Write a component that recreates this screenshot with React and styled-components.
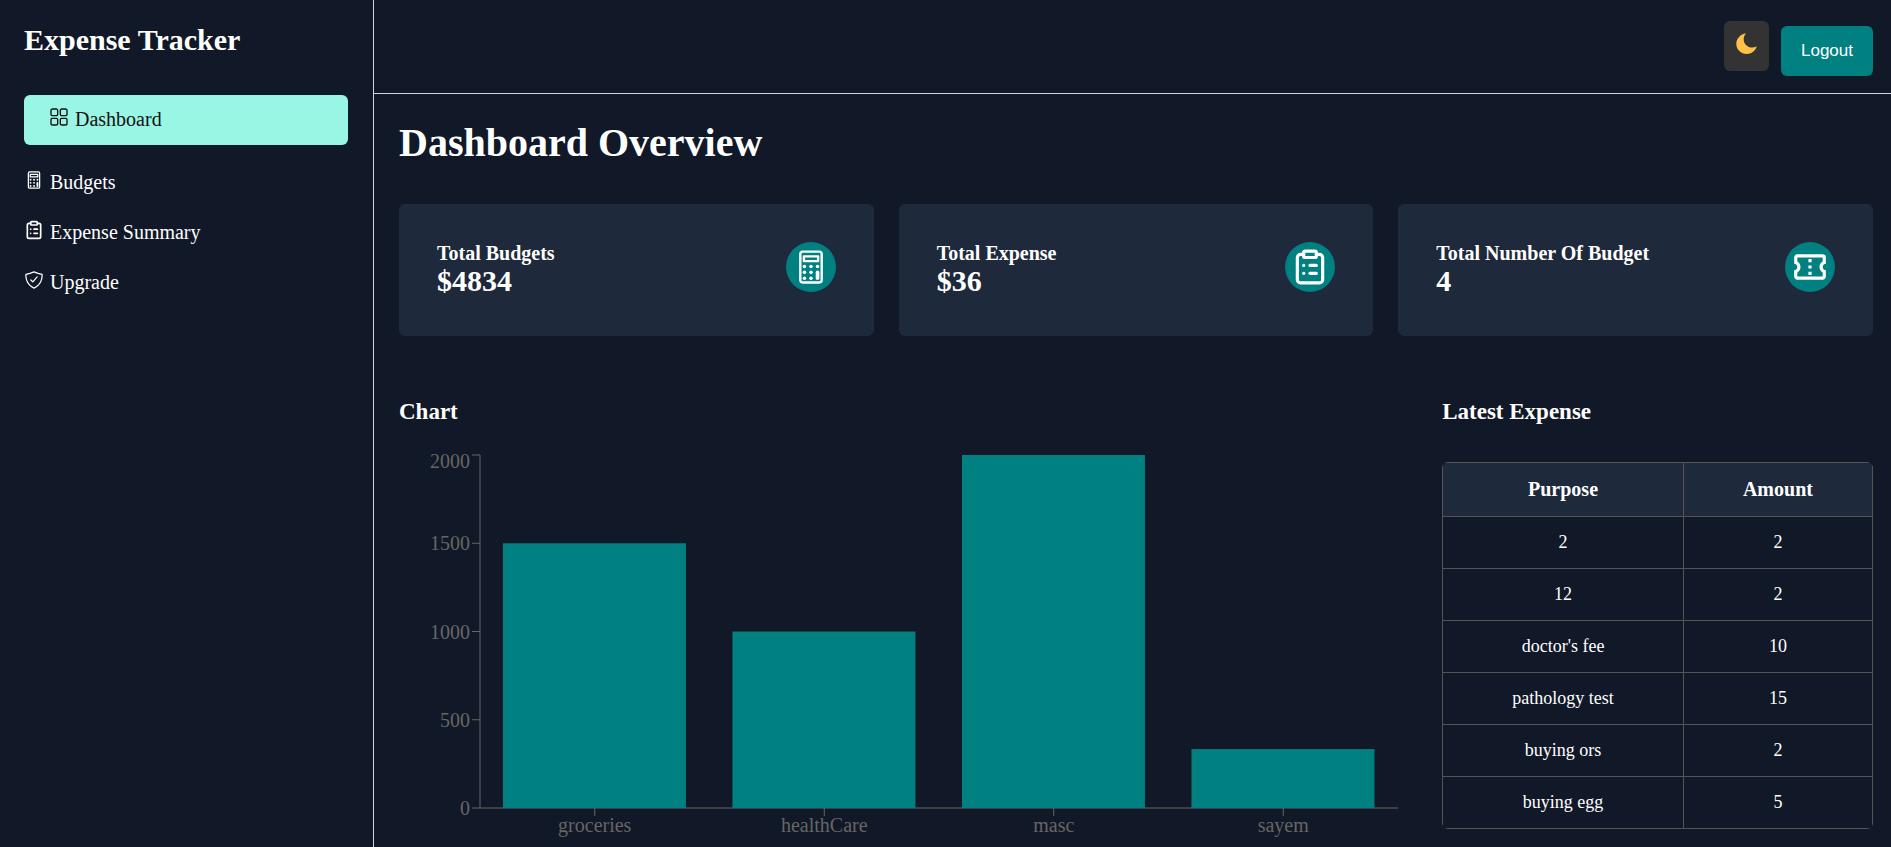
import React, { useLayoutEffect, useRef, useState } from "react";
import styled, { createGlobalStyle, css } from "styled-components";
import { LuClipboardList } from "react-icons/lu";
import { MdOutlineConfirmationNumber } from "react-icons/md";
import { RxDashboard } from "react-icons/rx";
import { IoCalculatorOutline, IoShieldCheckmarkOutline } from "react-icons/io5";

const serif = `"Liberation Serif", "Times New Roman", serif`;
const sans = `"Liberation Sans", Arial, sans-serif`;

const GlobalStyle = createGlobalStyle`
  *, *::before, *::after { box-sizing: border-box; }
  body {
    margin: 0;
    background: #111827;
    color: #ffffff;
    font-family: ${serif};
    font-size: 20px;
  }
  h1, h2, h3, p, ul { margin: 0; padding: 0; }
`;

const Page = styled.div`
  display: flex;
  min-height: 100vh;
`;

const Sidebar = styled.aside`
  flex: 0 0 374px;
  padding: 24px 25px 24px 24px;
  border-right: 1px solid #d1d5db;
`;

const Brand = styled.h2`
  font-size: 30px;
  line-height: 32px;
`;

const Nav = styled.nav`
  display: flex;
  flex-direction: column;
  margin-top: 39px;
`;

const NavLink = styled.a`
  line-height: 48px;
  height: 50px;
  color: inherit;
  text-decoration: none;

  svg {
    margin-right: 6px;
    vertical-align: -1px;
  }

  ${(p) =>
    p.$active &&
    css`
      margin-bottom: 13px;
      padding-left: 25px;
      border-radius: 6px;
      background: #99f6e4;
      color: #111111;
    `}
`;

const Main = styled.div`
  flex: 1;
  min-width: 0;
`;

const TopBar = styled.header`
  display: flex;
  justify-content: flex-end;
  align-items: flex-start;
  gap: 12px;
  height: 94px;
  padding: 21px 18px 0 25px;
  border-bottom: 1px solid #d1d5db;
`;

const BarButton = styled.button`
  height: 50px;
  border: none;
  border-radius: 6px;
  color: #ffffff;
  font-family: ${sans};
  font-size: 17px;
  cursor: pointer;
`;

const ThemeButton = styled(BarButton)`
  width: 45px;
  padding: 0 12px 6px;
  background: #333333;

  svg {
    display: block;
  }
`;

const LogoutButton = styled(BarButton)`
  margin-top: 5px;
  padding: 0 20px;
  background: #008080;
`;

const Content = styled.main`
  padding: 25px 18px 0 25px;
`;

const PageTitle = styled.h1`
  font-size: 40px;
  line-height: 48px;
`;

const Cards = styled.section`
  display: grid;
  grid-template-columns: repeat(3, 1fr);
  gap: 25px;
  margin-top: 37px;
`;

const Card = styled.article`
  display: flex;
  justify-content: space-between;
  align-items: flex-start;
  padding: 38px;
  border-radius: 6px;
  background: #1e293b;
`;

const CardLabel = styled.h3`
  font-size: 20px;
  line-height: 22px;
`;

const CardValue = styled.p`
  font-size: 30px;
  font-weight: bold;
  line-height: 34px;
`;

const IconDisc = styled.span`
  display: grid;
  place-items: center;
  width: 50px;
  height: 50px;
  border-radius: 50%;
  background: #008080;
  font-size: 38px;
`;

const Panels = styled.div`
  display: grid;
  grid-template-columns: 7fr 3fr;
  gap: 38px;
  margin-top: 62px;
`;

const Panel = styled.section`
  min-width: 0;
`;

const PanelTitle = styled.h3`
  font-size: 23px;
  line-height: 28px;
`;

const ChartBox = styled.div`
  height: 397px;
  margin-top: 23px;

  svg {
    display: block;
    font-size: 20px;
  }
`;

const TableFrame = styled.div`
  margin-top: 36px;
  border-radius: 6px;
  overflow: hidden;
`;

const Table = styled.table`
  width: 100%;
  border-collapse: collapse;
  text-align: center;

  th,
  td {
    padding: 0;
    border: 1px solid #555555;
  }
  th {
    height: 54px;
    background: #1e293b;
    font-size: 20px;
  }
  td {
    height: 52px;
    font-size: 18px;
  }
  th:first-child {
    width: 56%;
  }
`;

const links = [
  { label: "Dashboard", Icon: RxDashboard, active: true },
  { label: "Budgets", Icon: IoCalculatorOutline },
  { label: "Expense Summary", Icon: LuClipboardList },
  { label: "Upgrade", Icon: IoShieldCheckmarkOutline },
];

const cards = [
  { label: "Total Budgets", value: "$4834", Icon: IoCalculatorOutline },
  { label: "Total Expense", value: "$36", Icon: LuClipboardList },
  { label: "Total Number Of Budget", value: "4", Icon: MdOutlineConfirmationNumber },
];

const budgets = [
  { name: "groceries", amount: 1500 },
  { name: "healthCare", amount: 1000 },
  { name: "masc", amount: 2000 },
  { name: "sayem", amount: 334 },
];

const expenses = [
  ["2", 2],
  ["12", 2],
  ["doctor's fee", 10],
  ["pathology test", 15],
  ["buying ors", 2],
  ["buying egg", 5],
];

function Moon() {
  return (
    <svg width="21" height="21" viewBox="0 0 21 21" aria-hidden="true">
      <path
        d="M10 0.3C6.5 4.5 7.2 10 10.8 12.7C14 15.1 17.4 15 20.7 13.3C19.4 17.9 15.6 21 10.8 21C4.9 21 0.3 16.6 0.3 11C0.3 5.5 4.5 1.2 10 0.3Z"
        fill="#ffc048"
      />
    </svg>
  );
}

function BarChart({ data }) {
  const box = useRef(null);
  const [width, setWidth] = useState(0);

  useLayoutEffect(() => {
    const measure = () => setWidth(box.current.clientWidth);
    measure();
    const observer = new ResizeObserver(measure);
    observer.observe(box.current);
    return () => observer.disconnect();
  }, []);

  const left = 81;
  const right = width - 6;
  const top = 6;
  const bottom = 359;
  const max = 2000;
  const band = (right - left) / data.length;
  const yOf = (value) => bottom - ((bottom - top) * value) / max;

  return (
    <ChartBox ref={box}>
      {width > 0 && (
        <svg width={width} height="397" role="img" aria-label="Budget amounts">
          <g stroke="#666666">
            <line x1={left} x2={right} y1={bottom} y2={bottom} />
            <line x1={left} x2={left} y1={top} y2={bottom} />
            {[0, 500, 1000, 1500, 2000].map((v) => (
              <line key={v} x1={left - 8} x2={left} y1={yOf(v)} y2={yOf(v)} />
            ))}
            {data.map((d, i) => (
              <line
                key={d.name}
                x1={left + band * (i + 0.5)}
                x2={left + band * (i + 0.5)}
                y1={bottom}
                y2={bottom + 8}
              />
            ))}
          </g>
          <g fill="#666666" textAnchor="end">
            {[0, 500, 1000, 1500, 2000].map((v) => (
              <text key={v} x={left - 10} y={Math.max(yOf(v) + 7, 19)}>
                {v}
              </text>
            ))}
          </g>
          <g fill="#666666" textAnchor="middle">
            {data.map((d, i) => (
              <text key={d.name} x={left + band * (i + 0.5)} y={bottom + 24}>
                {d.name}
              </text>
            ))}
          </g>
          <g fill="#008080">
            {data.map((d, i) => (
              <rect
                key={d.name}
                x={left + band * (i + 0.1)}
                y={yOf(d.amount)}
                width={Math.floor(band * 0.8)}
                height={bottom - yOf(d.amount)}
              />
            ))}
          </g>
        </svg>
      )}
    </ChartBox>
  );
}

export default function App() {
  return (
    <>
      <GlobalStyle />
      <Page>
        <Sidebar>
          <Brand>Expense Tracker</Brand>
          <Nav>
            {links.map(({ label, Icon, active }) => (
              <NavLink key={label} href="#" $active={active}>
                <Icon />
                {label}
              </NavLink>
            ))}
          </Nav>
        </Sidebar>
        <Main>
          <TopBar>
            <ThemeButton type="button" aria-label="Toggle theme">
              <Moon />
            </ThemeButton>
            <LogoutButton type="button">Logout</LogoutButton>
          </TopBar>
          <Content>
            <PageTitle>Dashboard Overview</PageTitle>
            <Cards>
              {cards.map(({ label, value, Icon }) => (
                <Card key={label}>
                  <div>
                    <CardLabel>{label}</CardLabel>
                    <CardValue>{value}</CardValue>
                  </div>
                  <IconDisc>
                    <Icon />
                  </IconDisc>
                </Card>
              ))}
            </Cards>
            <Panels>
              <Panel>
                <PanelTitle>Chart</PanelTitle>
                <BarChart data={budgets} />
              </Panel>
              <Panel>
                <PanelTitle>Latest Expense</PanelTitle>
                <TableFrame>
                  <Table>
                    <thead>
                      <tr>
                        <th scope="col">Purpose</th>
                        <th scope="col">Amount</th>
                      </tr>
                    </thead>
                    <tbody>
                      {expenses.map(([purpose, amount]) => (
                        <tr key={purpose}>
                          <td>{purpose}</td>
                          <td>{amount}</td>
                        </tr>
                      ))}
                    </tbody>
                  </Table>
                </TableFrame>
              </Panel>
            </Panels>
          </Content>
        </Main>
      </Page>
    </>
  );
}
